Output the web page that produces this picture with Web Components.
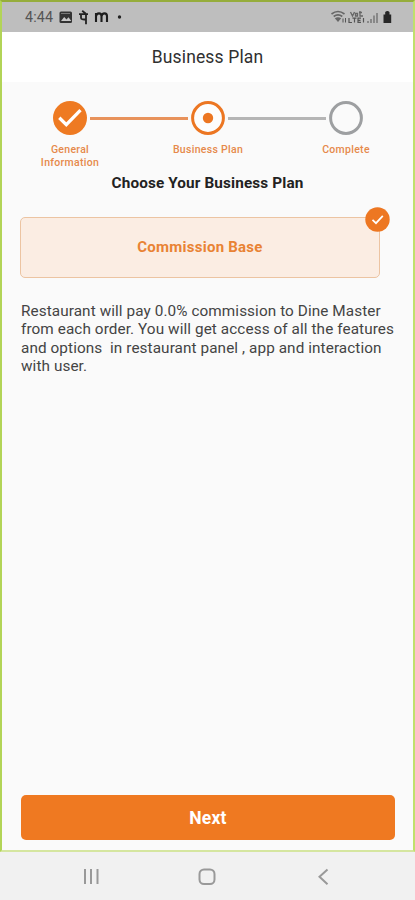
<!DOCTYPE html>
<html lang="en">
<head>
<meta charset="utf-8">
<title>Business Plan</title>
<style>
html,body{margin:0;height:100%;overflow:hidden;background:#f1f1f1}
body{font-family:Roboto,"Noto Sans",sans-serif}
</style>
</head>
<body>
<plan-screen></plan-screen>
<script>
const define=(name,html)=>customElements.define(name,class extends HTMLElement{
  constructor(){
    super();
    this.attachShadow({mode:'open'}).innerHTML='<style>*{box-sizing:border-box}svg{display:block}</style>'+html;
  }
});

define('status-bar',`<style>
:host{display:flex;height:30px;background:#bebebe;padding:0 18px 0 23px;align-items:center;justify-content:space-between;color:#555}
.time{font-size:14.3px;line-height:28px;letter-spacing:.15px;width:32px}
.left{display:flex;align-items:center;height:28px}
</style>
<div class="left"><span class="time">4:44</span>
<svg width="70" height="28" viewBox="57 2 70 28" fill="none">
<rect x="59.5" y="10.5" width="12.5" height="11.5" rx="1.5" fill="#333"/>
<path d="M61 20l3.2-4 2.3 2.4 2-2.2 2.8 3.8z" fill="#c8c8c8"/><path d="M61 12.5h9" stroke="#777" stroke-width="1"/>
<path d="M79 13.2h9M86 13.2v10M81 13.5v3.2q0 2.2 4.8 1.7M85.8 12.8l-3.600-3" stroke="#222" stroke-width="1.8"/>
<path d="M96 21v-9M96 15.200q.5-2.800 3-2.800t2.500 2.800V21M101.500 15.200q.5-2.800 3-2.800t2.500 2.800V21" stroke="#1d1d1d" stroke-width="2.100"/>
<circle cx="119.500" cy="16" r="1.700" fill="#222"/></svg></div>
<svg width="66" height="28" viewBox="329 2 66 28" fill="none">
<path d="M331.500 13q6.500-5 13 0M333.700 15.500q4.300-3.300 8.600 0" stroke="#666" stroke-width="1.600"/>
<path d="M334.800 17.200q3.200-2 6.400 0L338 21z" fill="#666"/>
<path d="M343 21.500v-4M345.500 17v4.500" stroke="#555"/>
<path d="M350.500 11l2 4 2-4M357.500 15h-2v-2.500h2zM360 10v5h3M359 11.500h3" stroke="#666" stroke-width="1.300"/>
<path d="M349 17v4.500h3M352.500 17.200h4M354.500 17v4.500M361 17.200h-3v4.200h3M358 19.300h2.500M363.500 17v4.500" stroke="#555" stroke-width="1.200"/>
<path d="M368 22v-2M371 22v-4M374 22v-7.500M377 22V12" stroke="#777" stroke-width="1.500"/>
<path d="M383.500 13.500h1.700V11q2.300-1.800 4.300 0v2.500h1.700V22h-7.700z" fill="#272727"/></svg>`);

define('app-bar',`<style>
:host{display:grid;place-items:center;height:50px;background:#fff;color:#303030;font-size:17.500px;line-height:20px;letter-spacing:.15px}
</style><slot></slot>`);

define('plan-step',`<style>
:host{display:flex;flex-direction:column;align-items:center;width:80px;color:#e6894a;font-size:10.500px;line-height:13px;text-align:center;letter-spacing:.3px;font-weight:500}
.label{margin-top:8px}svg{display:none}
:host([state=done]) .done,:host([state=current]) .current,:host([state=todo]) .todo{display:block}
</style>
<svg class="done" width="34" height="34" viewBox="0 0 34 34"><circle cx="17" cy="17" r="17" fill="#ee7a22"/><path d="M6.300 16.800l7 6.800L27.500 9.200" fill="none" stroke="#fff" stroke-width="3.300"/></svg>
<svg class="current" width="34" height="34" viewBox="0 0 34 34"><circle cx="17" cy="17" r="15.400" fill="#fdfdfd" stroke="#ec7622" stroke-width="3"/><circle cx="17" cy="17" r="5.200" fill="#ec7622"/></svg>
<svg class="todo" width="34" height="34" viewBox="0 0 34 34"><circle cx="17" cy="17" r="15.400" fill="none" stroke="#9d9fa1" stroke-width="3"/></svg>
<div class="label"><slot></slot></div>`);

define('plan-stepper',`<style>
:host{display:flex;padding:0 27px 0 28px;height:73px}
plan-step{flex:none}
.line{flex:1;margin:15.500px -20px 0;height:3px;background:#e8925b}
.off{background:#b5b5b5}
</style><plan-step state="done">General<br>Information</plan-step><div class="line"></div><plan-step state="current">Business Plan</plan-step><div class="line off"></div><plan-step state="todo">Complete</plan-step>`);

define('plan-option',`<style>
:host{display:grid;place-items:center;position:relative;margin:25px 33px 0 18px;height:61px;padding-bottom:2px;border:1px solid #ecc4a2;border-radius:5px;background:#fbede3;color:#e98334;font-size:15px;font-weight:700;letter-spacing:.25px}
svg{position:absolute;right:-11px;top:-11px}
</style><slot></slot><svg width="25" height="25" viewBox="0 0 25 25"><circle cx="12.500" cy="12.500" r="12.200" fill="#ed7722"/><path d="M7.500 12.800l3.500 3.400 6.800-7.300" fill="none" stroke="#fff" stroke-width="1.700"/></svg>`);

define('main-button',`<style>
:host{display:grid;place-items:center;margin:auto 18px 10px 19px;height:45px;border-radius:5px;background:#ef7921;color:#fff;font-size:17.500px;font-weight:700;letter-spacing:.2px}
</style><slot></slot>`);

define('nav-bar',`<style>
:host{display:block;height:48px;background:#f1f1f1}
</style><svg width="415" height="48" viewBox="0 852 415 48" fill="none" stroke="#999" stroke-width="2">
<path d="M85 869v15M91 869v15M97.500 869v15"/><rect x="199.500" y="869.500" width="15" height="14.500" rx="4.500"/><path d="M327.500 869.500l-8 7.300 8 7.400"/></svg>`);

define('plan-screen',`<style>
:host{display:flex;flex-direction:column;width:415px;height:900px}
.frame{height:852px;display:flex;flex-direction:column;background:#fafafa;border:solid;border-width:2px 2px 2px 2px;border-color:#96ad3c #bfe06c #d5e6a0 #b2d457}
.body{flex:1;display:flex;flex-direction:column;padding-top:19px}
h1{margin:0;text-align:center;color:#222;font-size:15.300px;line-height:18px;font-weight:700;letter-spacing:.13px;height:18px}
p{margin:24px 0 0 19px;white-space:pre;color:#444;font-size:15.300px;line-height:18.400px;letter-spacing:.09px}
</style>
<div class="frame"><status-bar></status-bar><app-bar>Business Plan</app-bar>
<div class="body"><plan-stepper></plan-stepper><h1>Choose Your Business Plan</h1>
<plan-option>Commission Base</plan-option>
<p>Restaurant will pay 0.0% commission to Dine Master
from each order. You will get access of all the features
and options  in restaurant panel , app and interaction
with user.</p>
<main-button>Next</main-button></div></div><nav-bar></nav-bar>`);
</script>
</body>
</html>
